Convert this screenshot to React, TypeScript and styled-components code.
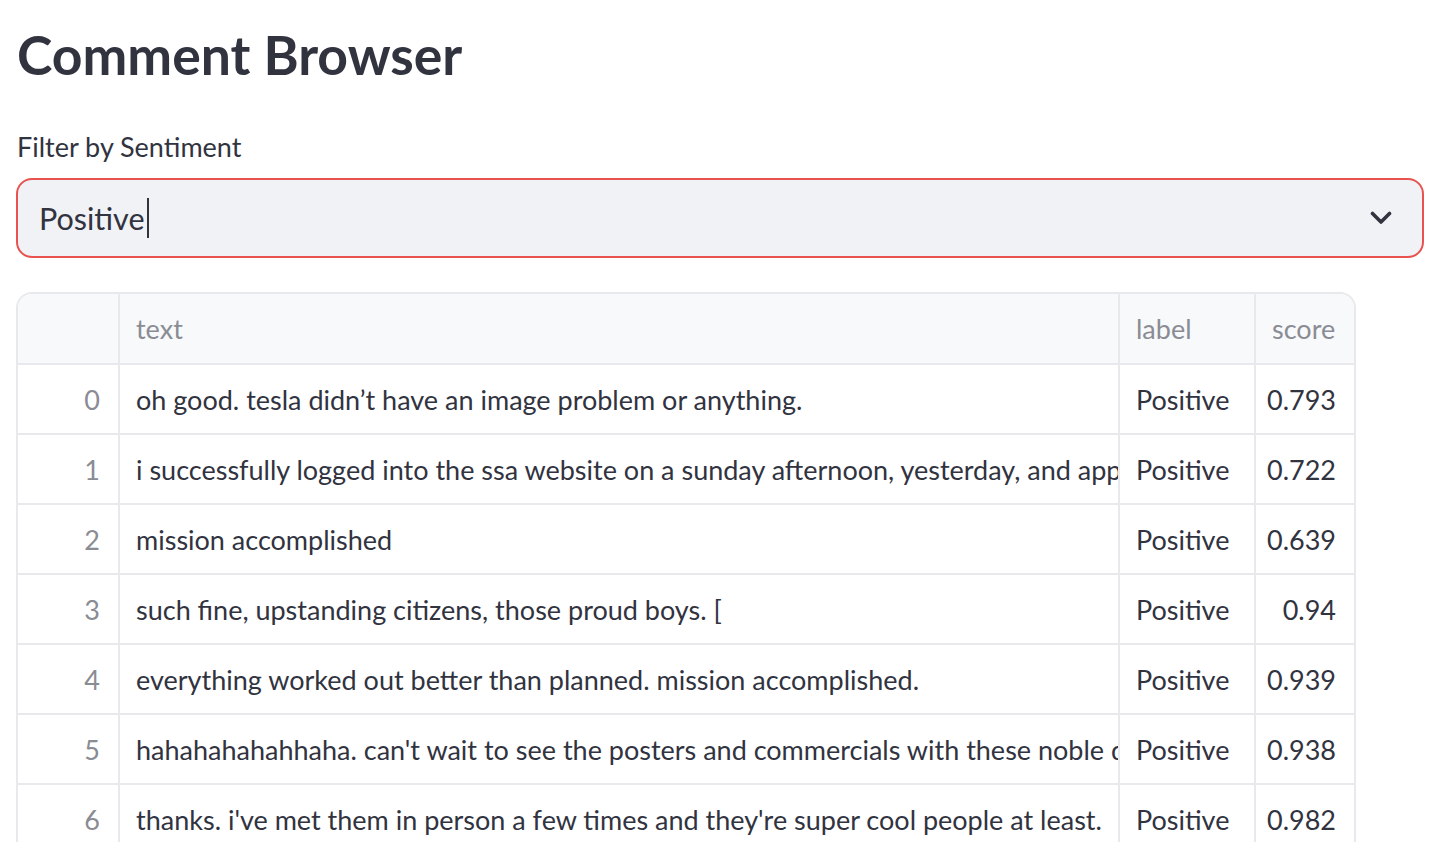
import React from "react";
import styled, { createGlobalStyle } from "styled-components";

const Global = createGlobalStyle`
  html, body { margin: 0; padding: 0; background: #ffffff; }
  body { font-family: "Lato", "Open Sans", sans-serif; color: #31333f; overflow: hidden; }
  * { box-sizing: border-box; }
`;

const Page = styled.main`
  display: flex;
  flex-direction: column;
  padding: 17px 28px 0 16px;
  width: 1452px;
`;

const Title = styled.h1`
  margin: 0;
  font-size: 53.5px;
  line-height: 74px;
  font-weight: 700;
  color: #31333f;
  padding-left: 1px;
`;

const Label = styled.label`
  margin-top: 38px;
  font-size: 27px;
  line-height: 36px;
  color: #31333f;
  padding-left: 1px;
`;

const SelectBox = styled.div`
  margin-top: 13px;
  height: 80px;
  display: flex;
  align-items: center;
  justify-content: space-between;
  padding: 0 30px 0 21px;
  background: #f0f2f6;
  border: 2px solid #e9524f;
  border-radius: 16px;
`;

const SelectValue = styled.div`
  display: flex;
  align-items: center;
  font-size: 30.5px;
  color: #31333f;
`;

const Caret = styled.span`
  display: inline-block;
  width: 2px;
  height: 40px;
  margin-left: 2px;
  background: #31333f;
`;

const Table = styled.div`
  margin-top: 34px;
  width: 1340px;
  border: 2px solid #e8e9ec;
  border-bottom: none;
  border-radius: 16px 16px 0 0;
  overflow: hidden;
  display: grid;
  grid-template-columns: 102px 1000px 136px 98px;
`;

const Cell = styled.div<{ $head?: boolean; $align?: "left" | "right"; $last?: boolean; $muted?: boolean }>`
  height: ${(p) => (p.$head ? "71px" : "70px")};
  display: flex;
  align-items: center;
  justify-content: ${(p) => (p.$align === "right" ? "flex-end" : "flex-start")};
  padding: ${(p) => (p.$align === "right" ? "0 18px 0 0" : "0 0 0 16px")};
  border-bottom: 2px solid #e8e9ec;
  border-right: ${(p) => (p.$last ? "none" : "2px solid #e8e9ec")};
  background: ${(p) => (p.$head ? "#f8f9fb" : "#ffffff")};
  color: ${(p) => (p.$head || p.$muted ? "#8a8c94" : "#31333f")};
  font-size: 27px;
  white-space: nowrap;
  overflow: hidden;
`;

const rows: [string, string, string][] = [
  ["oh good. tesla didn\u2019t have an image problem or anything.", "Positive", "0.793"],
  ["i successfully logged into the ssa website on a sunday afternoon, yesterday, and applied for benefits", "Positive", "0.722"],
  ["mission accomplished", "Positive", "0.639"],
  ["such fine, upstanding citizens, those proud boys. [", "Positive", "0.94"],
  ["everything worked out better than planned. mission accomplished.", "Positive", "0.939"],
  ["hahahahahahhaha. can't wait to see the posters and commercials with these noble defenders", "Positive", "0.938"],
  ["thanks. i've met them in person a few times and they're super cool people at least.", "Positive", "0.982"],
];

const Chevron = () => (
  <svg width="22" height="14" viewBox="0 0 22 14" fill="none">
    <path d="M2.5 2.5 L11 11 L19.5 2.5" stroke="#31333f" strokeWidth="3.6" strokeLinecap="round" strokeLinejoin="round" />
  </svg>
);

export default function App() {
  return (
    <>
      <Global />
      <Page>
        <Title>Comment Browser</Title>
        <Label>Filter by Sentiment</Label>
        <SelectBox>
          <SelectValue>
            Positive
            <Caret />
          </SelectValue>
          <Chevron />
        </SelectBox>
        <Table>
          <Cell $head />
          <Cell $head>text</Cell>
          <Cell $head>label</Cell>
          <Cell $head $last>score</Cell>
          {rows.map((r, i) => (
            <React.Fragment key={i}>
              <Cell $align="right" $muted>{i}</Cell>
              <Cell>{r[0]}</Cell>
              <Cell>{r[1]}</Cell>
              <Cell $align="right" $last>{r[2]}</Cell>
            </React.Fragment>
          ))}
        </Table>
      </Page>
    </>
  );
}
